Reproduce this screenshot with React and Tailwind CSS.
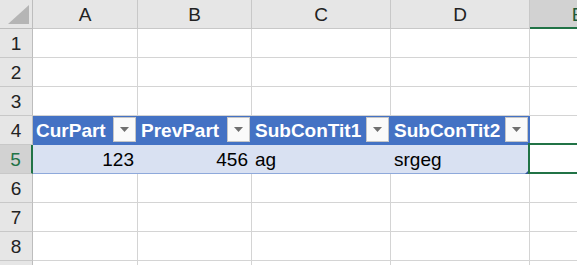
const cols = ["A", "B", "C", "D", "E"];
const widths = ["w-[105px]", "w-[114px]", "w-[139px]", "w-[139px]", "w-[96px]"];

const FilterButton = () => (
    <span className="mr-[1px] mt-[1px] flex h-[25px] w-[23px] shrink-0 items-center justify-center border border-[#c6c6c6] bg-[#fafafa]">
        <svg width="9" height="5" viewBox="0 0 9 5">
            <path d="M0 0 L9 0 L4.5 5 Z" fill="#6f6f6f" />
        </svg>
    </span>
);

const RowHeader = ({ n, active }) => (
    <div
        className={`flex h-[29px] w-[33px] shrink-0 items-center justify-center border-b border-[#c8c8c8] ${
            active
                ? "border-r-2 border-r-[#217346] bg-[#d2d2d2] text-[#217346]"
                : "border-r border-r-[#bdbdbd] bg-[#e6e6e6] text-[#222]"
        }`}
    >
        {n}
    </div>
);

const EmptyRow = ({ n }) => (
    <div className="flex">
        <RowHeader n={n} />
        {widths.map((w, i) => (
            <div key={i} className={`h-[29px] shrink-0 border-b border-r border-[#d4d4d4] bg-white ${w}`} />
        ))}
    </div>
);

const headers = ["CurPart", "PrevPart", "SubConTit1", "SubConTit2"];

export default function App() {
    return (
        <div className="h-[265px] w-[577px] overflow-hidden bg-white font-['Liberation_Sans',Arial,sans-serif] text-[19px] leading-none">
            <div className="flex">
                <div className="flex h-[29px] w-[33px] shrink-0 items-end justify-end border-b border-r border-[#bdbdbd] bg-[#e6e6e6] pb-[4px] pr-[3px]">
                    <svg width="21" height="19" viewBox="0 0 21 19">
                        <path d="M21 0 L21 19 L0 19 Z" fill="#b5b5b5" />
                    </svg>
                </div>
                {cols.map((c, i) =>
                    c === "E" ? (
                        <div
                            key={c}
                            className={`flex h-[29px] shrink-0 items-center justify-center border-b-2 border-b-[#217346] bg-[#d2d2d2] pt-[2px] text-[#1e5c38] ${widths[i]}`}
                        >
                            {c}
                        </div>
                    ) : (
                        <div
                            key={c}
                            className={`flex h-[29px] shrink-0 items-center justify-center border-b border-r border-[#c8c8c8] bg-[#e6e6e6] pt-[1px] text-[#222] ${widths[i]}`}
                        >
                            {c}
                        </div>
                    )
                )}
            </div>

            <EmptyRow n={1} />
            <EmptyRow n={2} />
            <EmptyRow n={3} />

            <div className="flex">
                <RowHeader n={4} />
                {headers.map((h, i) => (
                    <div
                        key={h}
                        className={`flex h-[29px] shrink-0 items-start justify-between border-r border-[#4472c4] bg-[#4472c4] ${widths[i]}`}
                    >
                        <span className="self-center pl-[3px] font-bold text-white">{h}</span>
                        <FilterButton />
                    </div>
                ))}
                <div className={`h-[29px] shrink-0 border-b border-r border-[#d4d4d4] bg-white ${widths[4]}`} />
            </div>

            <div className="flex">
                <RowHeader n={5} active />
                <div className={`flex h-[29px] shrink-0 items-center justify-end border-b border-[#8ea9db] bg-[#d9e1f2] pr-[4px] text-black ${widths[0]}`}>
                    123
                </div>
                <div className={`flex h-[29px] shrink-0 items-center justify-end border-b border-[#8ea9db] bg-[#d9e1f2] pr-[4px] text-black ${widths[1]}`}>
                    456
                </div>
                <div className={`flex h-[29px] shrink-0 items-center border-b border-[#8ea9db] bg-[#d9e1f2] pl-[3px] text-black ${widths[2]}`}>
                    ag
                </div>
                <div className={`relative flex h-[29px] shrink-0 items-center border-b border-[#8ea9db] bg-[#d9e1f2] pl-[3px] text-black ${widths[3]}`}>
                    srgeg
                    <svg className="absolute bottom-[-1px] right-0" width="5" height="5" viewBox="0 0 5 5">
                        <path d="M5 0 L5 5 L0 5 Z" fill="#2f5597" />
                    </svg>
                </div>
                <div className={`relative h-[29px] shrink-0 border-b border-r border-[#d4d4d4] bg-white ${widths[4]}`}>
                    <div className="absolute -left-[2px] -top-[2px] bottom-[-1px] right-0 border-2 border-[#217346]" />
                </div>
            </div>

            <EmptyRow n={6} />
            <EmptyRow n={7} />
            <EmptyRow n={8} />
            <EmptyRow n="" />
        </div>
    );
}
